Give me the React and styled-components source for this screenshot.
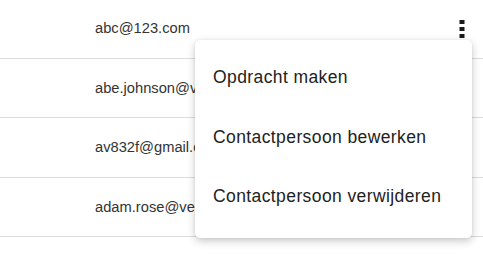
import React from 'react';
import styled, { createGlobalStyle } from 'styled-components';

const GlobalStyle = createGlobalStyle`
    html, body {
        margin: 0;
        padding: 0;
        background: #fff;
        font-family: "Liberation Sans", Arial, sans-serif;
    }
`;

const Table = styled.div`
    position: relative;
    width: 483px;
    height: 254px;
    overflow: hidden;
    margin-top: -1px;
`;

const Row = styled.div`
    display: flex;
    align-items: center;
    box-sizing: border-box;
    height: 59.5px;
    border-bottom: 1px solid #dcdcdc;
    padding-left: 95px;
    padding-right: 18px;
`;

const Email = styled.span`
    flex: 1;
    font-size: 14.7px;
    color: #333;
    white-space: nowrap;
`;

const KebabButton = styled.button`
    display: flex;
    align-items: center;
    justify-content: center;
    width: 6px;
    height: 20px;
    padding: 0;
    border: 0;
    background: none;
    margin-top: 2px;
`;

const Menu = styled.ul`
    position: absolute;
    top: 41px;
    left: 195px;
    width: 277px;
    margin: 0;
    padding: 8px 0 11px;
    list-style: none;
    background: #fff;
    border-radius: 5px;
    box-shadow: 0 3px 8px rgba(0, 0, 0, 0.22), 0 0 3px rgba(0, 0, 0, 0.06);
`;

const MenuItem = styled.li`
    display: flex;
    align-items: center;
    height: 59.5px;
    padding-left: 18px;
    font-size: 17.5px;
    letter-spacing: 0.4px;
    color: #222;
    cursor: pointer;
`;

function Kebab() {
    return (
        <svg width="6" height="19" viewBox="0 0 6 19">
            <rect x="0.5" y="0" width="5" height="4" fill="#1a1a1a" />
            <rect x="0.5" y="7" width="5" height="4" fill="#1a1a1a" />
            <rect x="0.5" y="14" width="5" height="4" fill="#1a1a1a" />
        </svg>
    );
}

const contacts = ['abc@123.com', 'abe.johnson@verkoop.nl', 'av832f@gmail.com', 'adam.rose@verkoop.nl'];
const actions = ['Opdracht maken', 'Contactpersoon bewerken', 'Contactpersoon verwijderen'];

export default function App() {
    return (
        <>
            <GlobalStyle />
            <Table>
                {contacts.map((email, i) => (
                    <Row key={email}>
                        <Email>{email}</Email>
                        {i === 0 ? <KebabButton><Kebab /></KebabButton> : null}
                    </Row>
                ))}
                <Menu>
                    {actions.map(a => (
                        <MenuItem key={a}>{a}</MenuItem>
                    ))}
                </Menu>
            </Table>
        </>
    );
}
